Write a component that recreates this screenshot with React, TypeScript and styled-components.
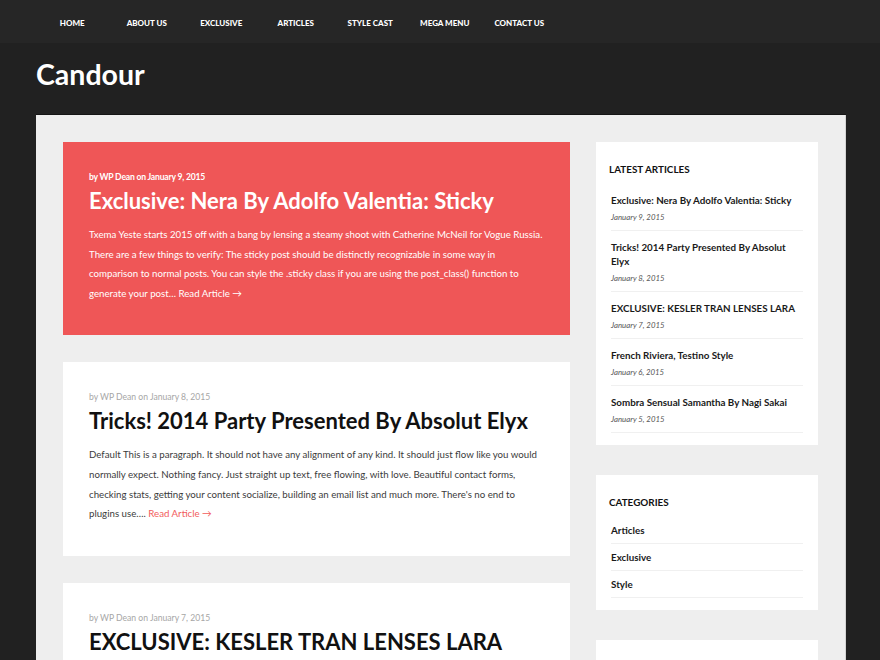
import React from "react";
import styled, { createGlobalStyle } from "styled-components";

const GlobalStyle = createGlobalStyle`
  html, body { margin: 0; padding: 0; }
  body {
    background: #212121;
    font-family: Lato, "Open Sans", sans-serif;
    -webkit-font-smoothing: antialiased;
  }
  * { box-sizing: border-box; }
`;

const NavBar = styled.nav`
  height: 43px;
  background: #262626;
  display: flex;
  padding-left: 35px;
`;

const NavItem = styled.a`
  width: 74.5px;
  text-align: center;
  line-height: 46px;
  font-size: 8px;
  font-weight: 900;
  color: #fff;
  text-transform: uppercase;
  text-decoration: none;
`;

const Header = styled.header`
  height: 72px;
  padding: 13px 0 0 36px;
`;

const SiteTitle = styled.h1`
  margin: 0;
  font-size: 28.5px;
  line-height: 36px;
  font-weight: 700;
  color: #fff;
`;

const Container = styled.div`
  margin-left: 36px;
  width: 810px;
  background: #eeeeee;
  padding: 27px 27px 0 27px;
  display: flex;
  gap: 26px;
  align-items: flex-start;
  box-shadow: 0 -1px 0 #151515;
  border-right: 1px solid #d4d4d4;
`;

const Posts = styled.main`
  width: 507px;
  display: flex;
  flex-direction: column;
  gap: 27px;
`;

const Card = styled.article<{ $sticky?: boolean }>`
  background: ${(p) => (p.$sticky ? "#ef5657" : "#fff")};
  padding: 29px 26px 32px;
  color: ${(p) => (p.$sticky ? "#fff" : "#3b3b3b")};
`;

const Meta = styled.div<{ $sticky?: boolean }>`
  font-size: 8.6px;
  line-height: 12px;
  font-weight: ${(p) => (p.$sticky ? 700 : 400)};
  letter-spacing: ${(p) => (p.$sticky ? "-0.2px" : "0")};
  color: ${(p) => (p.$sticky ? "#fff" : "#a6a6a6")};
`;

const PostTitle = styled.h2<{ $sticky?: boolean }>`
  margin: 4px 0 10px;
  font-size: 22px;
  line-height: 28px;
  font-weight: 700;
  color: ${(p) => (p.$sticky ? "#fff" : "#111")};
`;

const Excerpt = styled.p`
  margin: 0;
  font-size: 9.7px;
  line-height: 19.6px;
`;

const ReadMore = styled.a<{ $sticky?: boolean }>`
  color: ${(p) => (p.$sticky ? "#fff" : "#f25c5c")};
  text-decoration: none;
`;

const Sidebar = styled.aside`
  width: 222px;
  display: flex;
  flex-direction: column;
  gap: 30px;
`;

const Widget = styled.section`
  background: #fff;
  padding: 20px 15px 12px 13px;
`;

const WidgetTitle = styled.h3`
  margin: 0 0 8px;
  font-size: 9.9px;
  line-height: 14px;
  font-weight: 700;
  color: #111;
  text-transform: uppercase;
`;

const List = styled.ul`
  list-style: none;
  margin: 0;
  padding: 0 0 0 2px;
`;

const Item = styled.li<{ $compact?: boolean }>`
  padding: ${(p) => (p.$compact ? "6px 0 6px" : "9px 0 7px")};
  border-bottom: 1px solid #f0f0f0;
`;

const ItemLink = styled.a`
  display: block;
  font-size: 9.8px;
  line-height: 14px;
  font-weight: 700;
  color: #1a1a1a;
  text-decoration: none;
`;

const ItemDate = styled.div`
  margin-top: 4px;
  font-size: 7.8px;
  line-height: 12px;
  font-style: italic;
  color: #555;
`;

const navItems = ["Home", "About Us", "Exclusive", "Articles", "Style Cast", "Mega Menu", "Contact Us"];

const posts = [
  {
    sticky: true,
    date: "January 9, 2015",
    title: "Exclusive: Nera By Adolfo Valentia: Sticky",
    excerpt:
      "Txema Yeste starts 2015 off with a bang by lensing a steamy shoot with Catherine McNeil for Vogue Russia. There are a few things to verify: The sticky post should be distinctly recognizable in some way in comparison to normal posts. You can style the .sticky class if you are using the post_class() function to generate your post…",
  },
  {
    sticky: false,
    date: "January 8, 2015",
    title: "Tricks! 2014 Party Presented By Absolut Elyx",
    excerpt:
      "Default This is a paragraph. It should not have any alignment of any kind. It should just flow like you would normally expect. Nothing fancy. Just straight up text, free flowing, with love. Beautiful contact forms, checking stats, getting your content socialize, building an email list and much more. There's no end to plugins use….",
  },
  {
    sticky: false,
    date: "January 7, 2015",
    title: "EXCLUSIVE: KESLER TRAN LENSES LARA",
    excerpt:
      "Kesler Tran lenses Lara for an exclusive editorial with a soft palette and a relaxed attitude.",
  },
];

const latest = [
  { title: "Exclusive: Nera By Adolfo Valentia: Sticky", date: "January 9, 2015" },
  { title: "Tricks! 2014 Party Presented By Absolut Elyx", date: "January 8, 2015" },
  { title: "EXCLUSIVE: KESLER TRAN LENSES LARA", date: "January 7, 2015" },
  { title: "French Riviera, Testino Style", date: "January 6, 2015" },
  { title: "Sombra Sensual Samantha By Nagi Sakai", date: "January 5, 2015" },
];

const categories = ["Articles", "Exclusive", "Style"];

export default function App() {
  return (
    <>
      <GlobalStyle />
      <NavBar>
        {navItems.map((n) => (
          <NavItem key={n} href="#">
            {n}
          </NavItem>
        ))}
      </NavBar>
      <Header>
        <SiteTitle>Candour</SiteTitle>
      </Header>
      <Container>
        <Posts>
          {posts.map((p) => (
            <Card key={p.title} $sticky={p.sticky}>
              <Meta $sticky={p.sticky}>by WP Dean on {p.date}</Meta>
              <PostTitle $sticky={p.sticky}>{p.title}</PostTitle>
              <Excerpt>
                {p.excerpt} <ReadMore $sticky={p.sticky} href="#">Read Article →</ReadMore>
              </Excerpt>
            </Card>
          ))}
        </Posts>
        <Sidebar>
          <Widget>
            <WidgetTitle>Latest Articles</WidgetTitle>
            <List>
              {latest.map((l) => (
                <Item key={l.title}>
                  <ItemLink href="#">{l.title}</ItemLink>
                  <ItemDate>{l.date}</ItemDate>
                </Item>
              ))}
            </List>
          </Widget>
          <Widget>
            <WidgetTitle>Categories</WidgetTitle>
            <List>
              {categories.map((c) => (
                <Item key={c} $compact>
                  <ItemLink href="#">{c}</ItemLink>
                </Item>
              ))}
            </List>
          </Widget>
          <Widget>
            <WidgetTitle>Archives</WidgetTitle>
            <List>
              <Item $compact>
                <ItemLink href="#">January 2015</ItemLink>
              </Item>
            </List>
          </Widget>
        </Sidebar>
      </Container>
    </>
  );
}
